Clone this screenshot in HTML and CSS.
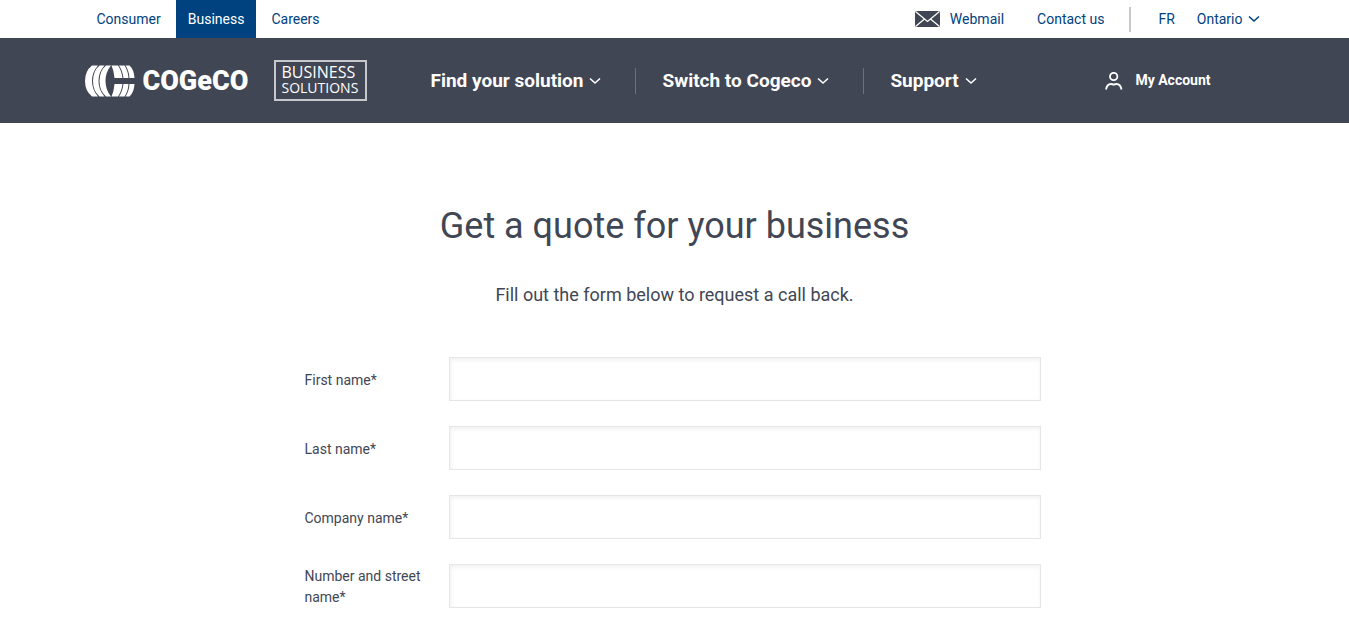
FILE: index.html
```html
<!DOCTYPE html>
<html lang="en">
<head>
<meta charset="utf-8">
<meta name="viewport" content="width=device-width, initial-scale=1">
<title>Get a quote for your business | Cogeco</title>
<link rel="stylesheet" href="styles.css">
</head>
<body>
<div class="topbar">
  <div class="container topbar-inner">
    <nav class="segments" aria-label="Segments">
      <a href="#consumer">Consumer</a>
      <a href="#business" class="active">Business</a>
      <a href="#careers">Careers</a>
    </nav>
    <div class="utility">
      <a href="#webmail" class="webmail">
        <svg width="25" height="16" viewBox="0 0 25 16" aria-hidden="true"><rect width="25" height="16" rx="1" fill="#414654"/><path d="M.5.5 12.5 10.5 24.5.5M.5 15.5 9.5 8M24.5 15.5 15.500 8" fill="none" stroke="#fff" stroke-width="1.3"/></svg>
        <span>Webmail</span>
      </a>
      <a href="#contact" class="contact">Contact us</a>
      <a href="#fr" class="language" lang="fr">FR</a>
      <a href="#region" class="region">Ontario
        <svg width="12" height="8" viewBox="0 0 12 8" aria-hidden="true"><path d="m1 1.500 5 4.500 5-4.500" fill="none" stroke="currentColor" stroke-width="1.6"/></svg>
      </a>
    </div>
  </div>
</div>
<header class="header">
  <div class="container header-inner">
    <a href="#home" class="brand" aria-label="Cogeco Business Solutions">
      <svg class="brand-mark" width="50" height="32" viewBox="0 0 50 32" aria-hidden="true">
        <g fill="#fff">
          <path d="M7 .5h6Q7 7 7 16t6 15.500H7Q0 26 0 16T7 .5Z"/>
          <path d="M14.500.5h5Q13.500 7 13.500 16t6 15.500h-5Q8 26 8 16t6.500-15.500Z"/>
          <path d="M21 .5h5Q20.500 7 20.500 16t5.500 15.500h-5Q14.500 26 14.500 16T21 .5Z"/>
          <path d="M26.500.5H33q3.500 5 4.500 12.500h-8Q29 6 26.500.5ZM34 .5h5.500q3.500 5 4 12.500h-5Q37.500 5.500 34 .5ZM40.500.5h4q4.500 4 5 12.500h-5Q44 5.500 40.500.5Z"/>
          <path d="M29.500 19h8q-1 7.500-4.500 12.500h-6.500Q29 26 29.500 19ZM38.500 19h5q-.5 7.500-4 12.500H34Q37.500 26.500 38.500 19ZM44.500 19h5q-.5 8.500-5 12.500h-4Q44 26.500 44.500 19Z"/>
        </g>
      </svg>
      <span class="brand-name">COGeCO</span>
      <span class="brand-unit"><span>BUSINESS</span><span class="brand-unit-sub">SOLUTIONS</span></span>
    </a>
    <nav class="main-nav" aria-label="Main">
      <button type="button">Find your solution
        <svg width="12" height="8" viewBox="0 0 12 8" aria-hidden="true"><path d="m1 1.500 5 4.500 5-4.500" fill="none" stroke="currentColor" stroke-width="1.6"/></svg></button>
      <button type="button">Switch to Cogeco
        <svg width="12" height="8" viewBox="0 0 12 8" aria-hidden="true"><path d="m1 1.500 5 4.500 5-4.500" fill="none" stroke="currentColor" stroke-width="1.6"/></svg></button>
      <button type="button">Support
        <svg width="12" height="8" viewBox="0 0 12 8" aria-hidden="true"><path d="m1 1.500 5 4.500 5-4.500" fill="none" stroke="currentColor" stroke-width="1.6"/></svg></button>
    </nav>
    <a href="#account" class="account">
      <svg width="18" height="18" viewBox="0 0 18 18" aria-hidden="true"><g fill="none" stroke="#fff" stroke-width="1.8"><circle cx="8.700" cy="4.500" r="3.700"/><path d="M1 17.500Q2 12 6 12q1.500 0 2.700.8Q10 12 11.500 12q4 0 5 5.500"/></g></svg>
      <span>My Account</span>
    </a>
  </div>
</header>
<main class="page">
  <h1>Get a quote for your business</h1>
  <p class="intro">Fill out the form below to request a call back.</p>
  <form class="quote-form">
    <div class="field"><label for="first-name">First name*</label><input id="first-name" type="text" required></div>
    <div class="field"><label for="last-name">Last name*</label><input id="last-name" type="text" required></div>
    <div class="field"><label for="company">Company name*</label><input id="company" type="text" required></div>
    <div class="field"><label for="street">Number and street name*</label><input id="street" type="text" required></div>
  </form>
</main>
</body>
</html>
```
FILE: styles.css
```css
* { box-sizing: border-box; }
body {
  margin: 0;
  background: #fff;
  color: #414654;
  font-family: Roboto, "Liberation Sans", sans-serif;
  font-size: 14px;
  line-height: 21px;
}
a { color: inherit; text-decoration: none; }
.container { max-width: 1180px; margin: 0 auto; }
.topbar { color: #00427f; }
.topbar-inner {
  display: flex;
  justify-content: space-between;
  height: 38px;
  padding-right: 5px;
}
.segments, .utility { display: flex; align-items: center; }
.segments a { padding: 9px 12px 8px; }
.segments a + a { margin-left: 3px; }
.webmail, .region, .account { display: flex; align-items: center; }
.segments .active { background: #004280; color: #fff; }
.webmail { gap: 10px; }
.contact { margin-left: 33px; }
.language {
  margin-left: 25px;
  padding: 2px 0 2px 27px;
  border-left: 2px solid #c9c9c9;
}
.region { margin-left: 22px; gap: 5px; }
.header { background: #414654; color: #fff; }
.header-inner {
  display: flex;
  align-items: center;
  height: 85px;
  padding-right: 54px;
}
.brand { display: flex; align-items: center; width: 320px; }
.brand-name {
  width: 107px;
  margin: 0 24px 0 8px;
  font: 900 27px/32px Roboto, sans-serif;
}
.brand-unit {
  display: flex;
  flex-direction: column;
  width: 93px;
  padding: 3px 6px 4px;
  border: 2px solid #c6c8cc;
  font: 400 16px/15px "Open Sans", sans-serif;
}
.brand-unit-sub { font-size: 14px; line-height: 15px; }
.main-nav { display: flex; align-items: center; }
.main-nav button {
  display: flex;
  align-items: center;
  gap: 6px;
  height: 26px;
  padding: 0 34px 0 26px;
  border: 0;
  border-right: 1px solid #6d717d;
  background: none;
  color: inherit;
  font: 700 19px/24px Roboto, sans-serif;
}
.main-nav button:last-child { border-right: 0; }
.account { gap: 12px; margin-left: auto; font-size: 14px; font-weight: 700; }
.page { padding: 80px 16px 24px; }
h1 {
  margin: 0;
  font-size: 36px;
  font-weight: 400;
  line-height: 46px;
  text-align: center;
}
.intro {
  margin: 33px 0 49px;
  font-size: 18px;
  line-height: 26px;
  text-align: center;
}
.quote-form {
  display: grid;
  gap: 25px;
  max-width: 740px;
  margin: 0 auto;
}
.field {
  display: grid;
  grid-template-columns: 144px minmax(0, 592px);
  align-items: center;
}
.field label { padding: 2px 16px 0 0; }
.field input {
  width: 100%;
  height: 44px;
  padding: 0 12px;
  border: 1px solid #e6e6e8;
  border-radius: 0;
  background: #fff;
  box-shadow: inset 1px 2px 4px #f0f0f0;
  color: inherit;
  font: inherit;
}
```
